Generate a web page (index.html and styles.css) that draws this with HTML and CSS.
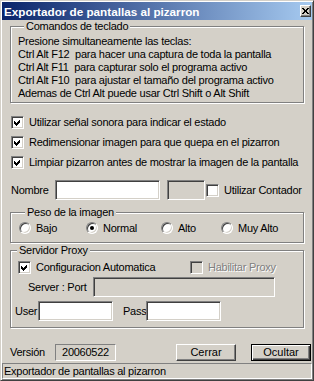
FILE: index.html
```html
<!doctype html>
<html lang="es">
<head>
  <meta charset="utf-8" />
  <title>Exportador de pantallas al pizarron</title>
  <link rel="stylesheet" href="styles.css">
</head>
<body>
<div class="window">

  <div class="titlebar">
    <span class="title">Exportador de pantallas al pizarron</span>
    <span class="close"><svg width="7" height="6" viewBox="0 0 7 6"><path d="M0 0h2v1h-2zM5 0h2v1h-2zM1 1h2v1h-2zM4 1h2v1h-2zM2 2h3v2h-3zM1 4h2v1h-2zM4 4h2v1h-2zM0 5h2v1h-2zM5 5h2v1h-2z" fill="#000"/></svg></span>
  </div>

  <div class="client">

    <fieldset class="group keys">
      <legend>Comandos de teclado</legend>
      <p>Presione simultaneamente las teclas:</p>
      <p>Ctrl Alt F12  para hacer una captura de toda la pantalla</p>
      <p>Ctrl Alt F11  para capturar solo el programa activo</p>
      <p>Ctrl Alt F10  para ajustar el tamaño del programa activo</p>
      <p>Ademas de Ctrl Alt puede usar Ctrl Shift o Alt Shift</p>
    </fieldset>

    <div class="options">
      <label class="opt"><span class="check"><svg viewBox="0 0 9 9"><polygon points="1,3 3,5 7,1 7,4 3,8 1,6"/></svg></span>Utilizar señal sonora para indicar el estado</label>
      <label class="opt"><span class="check"><svg viewBox="0 0 9 9"><polygon points="1,3 3,5 7,1 7,4 3,8 1,6"/></svg></span>Redimensionar imagen para que quepa en el pizarron</label>
      <label class="opt"><span class="check"><svg viewBox="0 0 9 9"><polygon points="1,3 3,5 7,1 7,4 3,8 1,6"/></svg></span>Limpiar pizarron antes de mostrar la imagen de la pantalla</label>
    </div>

    <div class="name-row">
      <span class="lbl">Nombre</span>
      <span class="edit name-edit"></span>
      <span class="edit off counter"></span>
      <label class="opt"><span class="check"></span>Utilizar Contador</label>
    </div>

    <fieldset class="group weight">
      <legend>Peso de la imagen</legend>
      <div class="radios">
        <label class="radio"><span class="dot"></span>Bajo</label>
        <label class="radio"><span class="dot on"></span>Normal</label>
        <label class="radio"><span class="dot"></span>Alto</label>
        <label class="radio"><span class="dot"></span>Muy Alto</label>
      </div>
    </fieldset>

    <fieldset class="group proxy">
      <legend>Servidor Proxy</legend>
      <div class="proxy-top">
        <label class="opt auto"><span class="check"><svg viewBox="0 0 9 9"><polygon points="1,3 3,5 7,1 7,4 3,8 1,6"/></svg></span>Configuracion Automatica</label>
        <label class="opt disabled"><span class="check off"></span>Habilitar Proxy</label>
      </div>
      <div class="server-row">
        <span class="lbl">Server : Port</span>
        <span class="edit off server"></span>
      </div>
      <div class="user-row">
        <span class="lbl">User</span>
        <span class="edit small"></span>
        <span class="lbl pass">Pass</span>
        <span class="edit small"></span>
      </div>
    </fieldset>

    <div class="footer">
      <span class="lbl">Versión</span>
      <span class="static">20060522</span>
      <button class="btn">Cerrar</button>
      <button class="btn default">Ocultar</button>
    </div>

  </div>

  <div class="status">Exportador de pantallas al pizarron</div>

</div>
</body>
</html>
```

FILE: styles.css
```css
:root{
  --face:#d4d0c8;
  --shadow:#808080;
  --dark:#404040;
}

*{box-sizing:border-box;margin:0;padding:0}

body{
  background:var(--face);
  font:11px/13px "Liberation Sans",Arial,sans-serif;
  letter-spacing:-0.25px;
  color:#000;
}

.window{
  width:314px;height:381px;
  display:flex;flex-direction:column;
  padding:1px;
  background:var(--face);
  border:1px solid;
  border-color:var(--face) var(--dark) var(--dark) var(--face);
  box-shadow:inset 1px 1px 0 #fff,inset -1px -1px 0 var(--shadow);
}

.titlebar{
  height:18px;
  display:flex;align-items:center;justify-content:space-between;
  padding:0 1px 0 2px;
  background:linear-gradient(90deg,#0a246a,#a6caf0);
}
.title{color:#fff;font-weight:700;font-size:11.7px;letter-spacing:0}
.close{
  width:11px;height:12px;
  display:flex;align-items:center;justify-content:center;
  background:var(--face);
  border:1px solid;
  border-color:#fff var(--dark) var(--dark) #fff;
  box-shadow:inset -1px -1px 0 var(--shadow);
}
.close svg{display:block}

.client{flex:1;display:flex;flex-direction:column}

/* group boxes */
.group{
  margin:0 8px;
  border:1px solid var(--shadow);
  box-shadow:1px 1px 0 #fff,inset 1px 1px 0 #fff;
}
.group legend{
  margin-left:6px;padding:0 2px;
  line-height:12px;
  background:var(--face);
}
.keys{padding:3px 0 2px 7px}
.keys p{white-space:pre;height:13px}

.opt{display:flex;align-items:center;gap:5px;white-space:nowrap}
.check{
  width:13px;height:13px;flex:none;
  background:#fff;
  border:1px solid;
  border-color:var(--shadow) #fff #fff var(--shadow);
  box-shadow:inset 1px 1px 0 var(--dark),inset -1px -1px 0 var(--face);
  padding:1px;
}
.check svg{display:block;width:9px;height:9px;fill:#000;shape-rendering:crispEdges}
.check.off{background:var(--face)}
.disabled{color:var(--shadow);text-shadow:1px 1px 0 #fff}

.options{margin:9px 0 0 9px}
.options .opt{height:20px}

.edit{
  display:block;height:20px;
  background:#fff;
  border:1px solid;
  border-color:var(--shadow) #fff #fff var(--shadow);
  box-shadow:inset 1px 1px 0 var(--dark),inset -1px -1px 0 var(--face);
}
.edit.off{background:var(--face)}

.name-row{display:flex;align-items:center;height:20px;margin:8px 0 0 9px}
.name-row .lbl{width:44px}
.name-edit{width:105px}
.counter{width:38px;margin-left:7px}
.name-row .opt{margin-left:1px}

.weight{margin-top:6px;padding:2px 0 6px 8px}
.radios{display:grid;grid-template-columns:67px 75px 60px auto;height:16px;align-items:center}
.radio{display:flex;align-items:center;gap:5px}
.dot{
  width:12px;height:12px;border-radius:50%;
  display:flex;align-items:center;justify-content:center;
  background:#fff;
  border:1px solid;
  border-color:var(--shadow) #fff #fff var(--shadow);
  box-shadow:inset 1px 1px 0 var(--dark),inset -1px -1px 0 var(--face);
}
.dot.on::after{content:"";width:4px;height:4px;border-radius:50%;background:#000}

.proxy{margin-top:1px;padding:2px 0 6px 0}
.proxy-top{display:flex;height:19px;align-items:center;padding-left:7px}
.proxy-top .auto{width:172px}
.server-row{display:flex;align-items:center;padding-left:17px}
.server-row .lbl{width:65px}
.server{width:182px}
.user-row{display:flex;align-items:center;margin-top:4px;padding-left:4px}
.user-row .lbl{width:23px}
.user-row .pass{width:23px;margin-left:10px}
.small{width:75px}

.footer{margin-top:auto;margin-bottom:2px;display:flex;align-items:center;height:17px;padding-left:8px}
.footer .lbl{width:45px}
.static{
  width:61px;height:17px;
  text-align:center;line-height:15px;
  border:1px solid;
  border-color:var(--shadow) #fff #fff var(--shadow);
}
.btn{
  width:60px;height:17px;
  font:inherit;color:#000;
  background:var(--face);
  border:1px solid;
  border-color:#fff var(--dark) var(--dark) #fff;
  box-shadow:inset -1px -1px 0 var(--shadow);
  margin-left:60px;
}
.btn.default{
  margin-left:15px;
  border-color:#000;
  box-shadow:inset 1px 1px 0 #fff,inset -1px -1px 0 var(--dark),inset -2px -2px 0 var(--shadow);
}

.status{
  height:16px;
  padding-left:1px;
  line-height:14px;
  border:1px solid;
  border-color:var(--shadow) #fff #fff var(--shadow);
  white-space:nowrap;overflow:hidden;
}
```
